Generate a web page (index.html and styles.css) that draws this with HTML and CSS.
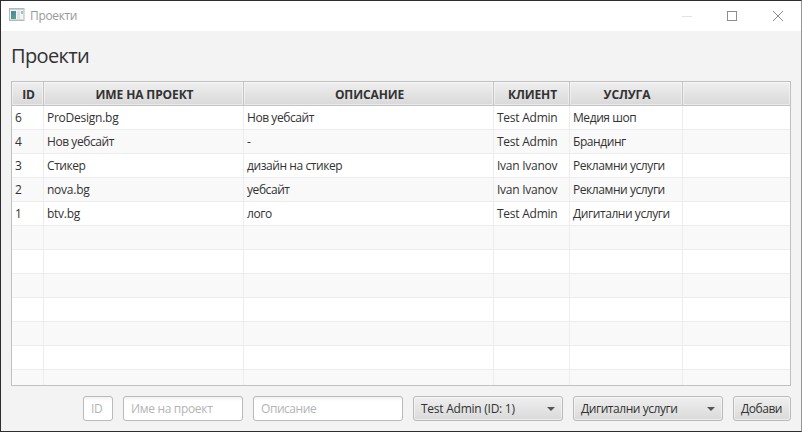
FILE: index.html
```
<!DOCTYPE html>
<html lang="bg">
<head>
<meta charset="utf-8">
<title>Проекти</title>
<link rel="stylesheet" href="styles.css">
</head>
<body>
<div class="window">
  <header class="titlebar">
    <svg class="app-icon" width="16" height="14" viewBox="0 0 16 14">
      <defs><linearGradient id="g" x1="0" y1="0" x2="0.6" y2="1"><stop offset="0" stop-color="#4f7fa8"/><stop offset="1" stop-color="#4fa583"/></linearGradient></defs>
      <rect x=".5" y=".5" width="14.500" height="12" fill="#f2f4f5" stroke="#b3b8bc"/>
      <rect x="1" y="1" width="13.500" height="1" fill="#c9ced2"/>
      <rect x="2" y="3" width="5" height="8" fill="url(#g)"/>
      <rect x="8" y="3" width="3" height="8" fill="#dfe3e5"/>
      <rect x="12" y="3" width="2" height="3" fill="#9cc3c8"/>
      <rect x="1" y="11" width="13.500" height="1" fill="#d5d9dc"/>
    </svg>
    <span class="title">Проекти</span>
    <svg class="controls" width="102" height="10" viewBox="0 0 102 10" shape-rendering="crispEdges" fill="none">
      <path d="M0 5.500H10" stroke="#e3e3e3"/>
      <rect x="45.500" y=".5" width="9" height="9" stroke="#8c8c8c"/>
      <path d="M91 0L101 10M101 0L91 10" stroke="#8c8c8c" shape-rendering="auto"/>
    </svg>
  </header>
  <main class="content">
    <h1>Проекти</h1>
    <div class="table">
      <div class="row head"><div>ID</div><div>ИМЕ НА ПРОЕКТ</div><div>ОПИСАНИЕ</div><div>КЛИЕНТ</div><div>УСЛУГА</div><div></div></div>
      <div class="row"><div>6</div><div class="latin">ProDesign.bg</div><div>Нов уебсайт</div><div class="latin">Test Admin</div><div>Медия шоп</div><div></div></div>
      <div class="row"><div>4</div><div>Нов уебсайт</div><div>-</div><div class="latin">Test Admin</div><div>Брандинг</div><div></div></div>
      <div class="row"><div>3</div><div>Стикер</div><div>дизайн на стикер</div><div class="latin">Ivan Ivanov</div><div>Рекламни услуги</div><div></div></div>
      <div class="row"><div>2</div><div class="latin">nova.bg</div><div>уебсайт</div><div class="latin">Ivan Ivanov</div><div>Рекламни услуги</div><div></div></div>
      <div class="row"><div>1</div><div class="latin">btv.bg</div><div>лого</div><div class="latin">Test Admin</div><div>Дигитални услуги</div><div></div></div>
      <div class="row"><div></div><div></div><div></div><div></div><div></div><div></div></div>
      <div class="row"><div></div><div></div><div></div><div></div><div></div><div></div></div>
      <div class="row"><div></div><div></div><div></div><div></div><div></div><div></div></div>
      <div class="row"><div></div><div></div><div></div><div></div><div></div><div></div></div>
      <div class="row"><div></div><div></div><div></div><div></div><div></div><div></div></div>
      <div class="row"><div></div><div></div><div></div><div></div><div></div><div></div></div>
      <div class="row"><div></div><div></div><div></div><div></div><div></div><div></div></div>
    </div>
    <div class="form">
      <div class="field id">ID</div>
      <div class="field name">Име на проект</div>
      <div class="field desc">Описание</div>
      <div class="button combo latin"><span>Test Admin (ID: 1)</span><i class="arrow"></i></div>
      <div class="button combo"><span>Дигитални услуги</span><i class="arrow"></i></div>
      <div class="button add">Добави</div>
    </div>
  </main>
</div>
</body>
</html>
```
FILE: styles.css
```
* { box-sizing: border-box; }
body {
  margin: 0;
  font: 12px/16px "Open Sans", "Noto Sans", sans-serif;
  color: #323232;
}
.window {
  width: 802px;
  height: 432px;
  border: 1px solid #302d30;
  border-right-color: #959595;
  background: #f3f3f3;
  display: flex;
  flex-direction: column;
}
.titlebar {
  height: 30px;
  background: #fff;
  display: flex;
  align-items: center;
  padding: 0 17px 0 8px;
  color: #999;
}
.app-icon { margin: -2px 5px 0 0; }
.title { flex: 1; letter-spacing: -0.35px; }
.controls { margin-top: -1px; }
.content {
  flex: 1;
  display: flex;
  flex-direction: column;
  padding: 10px;
}
h1 {
  margin: 0 0 10px;
  height: 30px;
  font-size: 20px;
  line-height: 30px;
  font-weight: 400;
  letter-spacing: -0.65px;
}
.table {
  height: 305px;
  border: 1px solid #c0c0c0;
  overflow: hidden;
  background: #fff;
}
.row {
  display: grid;
  grid-template-columns: 32px 200px 250px 76px 113px 1fr;
  height: 24px;
  letter-spacing: -0.43px;
}
.row > div {
  border-right: 1px solid #ededed;
  border-bottom: 1px solid #ededed;
  padding: 4px 0 0 3px;
  white-space: nowrap;
}
.row > div:last-child { border-right: 0; }
.row:nth-child(odd) { background: #f9f9f9; }
.row.head { letter-spacing: -0.12px; }
.row.head > div {
  border-color: #c4c4c4;
  background: linear-gradient(#efefef, #d9d9d9);
  box-shadow: inset 0 0 0 1px rgba(255, 255, 255, .45);
  font-weight: 700;
  text-align: center;
  padding: 5px 0 0 2px;
}
.form {
  display: flex;
  gap: 10px;
  justify-content: flex-end;
  margin-top: 10px;
  letter-spacing: -0.45px;
}
.field, .button {
  height: 25px;
  border: 1px solid #bababa;
  border-radius: 3px;
  padding: 4px 7px 0;
  white-space: nowrap;
}
.field {
  background: linear-gradient(#f0f0f0, #fff 4px);
  color: #b4b4b4;
}
.id { width: 30px; }
.name { width: 120px; }
.desc { width: 150px; }
.button {
  background: linear-gradient(#efefef, #dadada);
  box-shadow: inset 0 0 0 1px rgba(255, 255, 255, .5);
}
.combo {
  width: 150px;
  display: flex;
  justify-content: space-between;
}
.arrow {
  width: 8px;
  height: 4px;
  margin-top: 6px;
  background: #555;
  clip-path: polygon(0 0, 100% 0, 50% 100%);
}
.add { width: 58px; }
.latin { letter-spacing: -0.25px; }
.name { letter-spacing: -0.33px; }
```
